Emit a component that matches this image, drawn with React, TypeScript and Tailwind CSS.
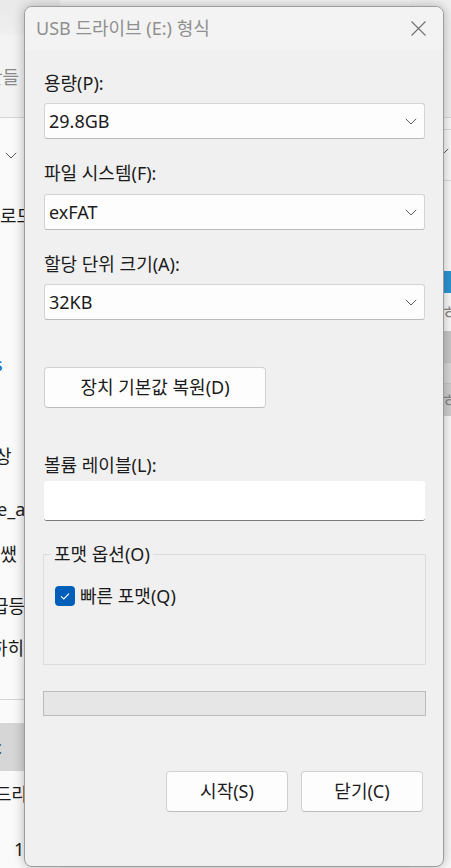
import React from 'react';

function Chevron() {
  return (
    <svg width="12" height="7" viewBox="0 0 12 7" className="shrink-0">
      <path d="M0.8 0.8 L6 6 L11.2 0.8" fill="none" stroke="#5c5c5c" strokeWidth="1" />
    </svg>
  );
}

function Select({ value }: { value: string }) {
  return (
    <div className="flex h-[36px] items-center justify-between rounded-[3px] border border-[#d4d4d4] border-b-[#bababa] bg-[#fdfdfd] pl-[4px] pr-[7px]">
      <span>{value}</span>
      <Chevron />
    </div>
  );
}

function Label({ children, className = '' }: { children: React.ReactNode; className?: string }) {
  return <div className={`h-[24px] leading-[24px] ${className}`}>{children}</div>;
}

function Button({ children, className = '' }: { children: React.ReactNode; className?: string }) {
  return (
    <button
      type="button"
      className={`h-[41px] rounded-[4px] border border-[#d0d0d0] border-b-[#bdbdbd] bg-[#fdfdfd] text-[#1b1b1b] ${className}`}
    >
      {children}
    </button>
  );
}

function Background() {
  return (
    <div className="flex h-full w-full">
      {/* left edge of the window behind */}
      <div className="flex w-[60px] flex-col overflow-hidden text-[18px] text-[#1b1b1b]">
        <div className="h-[35px] shrink-0 bg-gradient-to-b from-[#e9e9e9] to-[#efefef]" />
        <div className="flex h-[83px] shrink-0 items-center whitespace-nowrap border-b border-[#d6d6d6] bg-[#f3f3f3] pt-[2px] text-[#8a8a8a]">
          <span className="ml-[-14px]">만들</span>
        </div>
        <div className="flex flex-1 flex-col bg-[#fafafa]">
          <div className="flex h-[72px] items-center pl-[5px] pt-[3px]">
            <Chevron />
          </div>
          <div className="mt-[14px] whitespace-nowrap leading-[24px]">로드</div>
          <div className="mt-[124px] whitespace-nowrap leading-[24px] text-[#0067c0]">
            <span className="ml-[-6px]">s</span>
          </div>
          <div className="mt-[68px] whitespace-nowrap leading-[24px]">
            <span className="ml-[-5px]">상</span>
          </div>
          <div className="mt-[29px] whitespace-nowrap leading-[24px]">
            <span className="ml-[-3px]">e_a</span>
          </div>
          <div className="mt-[21px] whitespace-nowrap leading-[24px]">
            <span className="ml-[-9px]">l 쌨</span>
          </div>
          <div className="mt-[28px] whitespace-nowrap leading-[24px]">
            <span className="ml-[-8px]">급등</span>
          </div>
          <div className="mt-[18px] whitespace-nowrap leading-[24px]">
            <span className="ml-[-9px]">하히</span>
          </div>
          <div className="mt-[39px] h-px bg-[#d4d4d4]" />
          <div className="mt-[23px] flex h-[48px] items-center whitespace-nowrap bg-[#d6d6d6]">
            <span className="ml-[-7px]">c</span>
          </div>
          <div className="mt-[11px] whitespace-nowrap leading-[24px]">
            <span className="ml-[-5px]">드라</span>
          </div>
          <div className="mt-[31px] whitespace-nowrap leading-[24px]">
            <span className="ml-[14px]">1개</span>
          </div>
        </div>
      </div>
      <div className="flex-1 bg-[#f3f3f3]" />
      {/* right edge of the window behind */}
      <div className="flex w-[40px] flex-col overflow-hidden bg-[#f9f9f9] text-[18px] text-[#8a8a8a]">
        <div className="h-[118px] shrink-0 border-b border-[#d9d9d9] bg-[#f0f0f0]" />
        <div className="h-[12px] shrink-0 border-b border-[#dcdcdc]" />
        <div className="flex h-[51px] shrink-0 items-center border-b border-[#dcdcdc] pl-[26px] pb-[8px]">
          <Chevron />
        </div>
        <div className="h-[90px] shrink-0" />
        <div className="h-[22px] shrink-0 bg-[#2b95d2]" />
        <div className="flex h-[38px] shrink-0 items-center whitespace-nowrap pl-[30px]">ㅎ</div>
        <div className="h-[31px] shrink-0 bg-[#c8c8c8]" />
        <div className="h-[22px] shrink-0 border-y border-[#c4c4c4] bg-[#d8d8d8]" />
        <div className="flex h-[32px] shrink-0 items-center whitespace-nowrap bg-[#cfcfcf] pl-[30px]">ㅎ</div>
        <div className="flex-1" />
      </div>
    </div>
  );
}

export default function App() {
  return (
    <div className="relative h-[868px] w-[451px] overflow-hidden font-[family-name:'Noto_Sans','Noto_Sans_CJK_KR',sans-serif] text-[18px] text-[#1b1b1b]">
      <Background />

      {/* Format dialog */}
      <div className="absolute left-[24px] top-[6px] flex h-[861px] w-[420px] flex-col overflow-hidden rounded-[8px] border border-[#9d9d9d] bg-[#f0f0f0] shadow-[0_0_12px_rgba(0,0,0,0.28)]">
        {/* Title bar */}
        <div className="flex h-[43px] shrink-0 items-center justify-between bg-[#f3f3f3] pl-[11px] pr-[17px]">
          <span className="text-[#8f8f8f]">USB 드라이브 (E:) 형식</span>
          <svg width="15" height="15" viewBox="0 0 15 15">
            <path d="M0.5 0.5 L14.5 14.5 M14.5 0.5 L0.5 14.5" stroke="#707070" strokeWidth="1.1" fill="none" />
          </svg>
        </div>

        {/* Body */}
        <div className="flex flex-1 flex-col pl-[19px] pr-[18px] pt-[21px]">
          <Label className="mb-[8px]">용량(P):</Label>
          <Select value="29.8GB" />

          <Label className="mb-[9px] mt-[22px]">파일 시스템(F):</Label>
          <Select value="exFAT" />

          <Label className="mb-[8px] mt-[22px]">할당 단위 크기(A):</Label>
          <Select value="32KB" />

          <Button className="mt-[47px] w-[222px]">장치 기본값 복원(D)</Button>

          <Label className="mb-[4px] mt-[45px]">볼륨 레이블(L):</Label>
          <div className="h-[40px] rounded-[3px] border-b-[1.5px] border-[#7a7a7a] bg-white" />

          <fieldset className="mx-[-1px] mt-[21px] border border-[#dcdcdc] pb-[58px] pl-[7px]">
            <legend className="px-[3px] leading-[24px]">포맷 옵션(O)</legend>
            <div className="mt-[20px] flex items-center gap-[5px] pl-[4px]">
              <span className="flex h-[20px] w-[20px] items-center justify-center rounded-[4px] bg-[#005fb8]">
                <svg width="20" height="20" viewBox="0 0 20 20">
                  <path d="M6 10.4 L8.8 13 L14 7.6" fill="none" stroke="white" strokeWidth="1.1" />
                </svg>
              </span>
              <span className="leading-[20px]">빠른 포맷(Q)</span>
            </div>
          </fieldset>

          <div className="mx-[-1px] mt-[26px] h-[25px] border border-[#bcbcbc] bg-[#e6e6e6]" />

          <div className="mt-[55px] flex justify-end gap-[13px] pr-[2px]">
            <Button className="w-[122px]">시작(S)</Button>
            <Button className="w-[122px]">닫기(C)</Button>
          </div>
        </div>
      </div>
    </div>
  );
}
